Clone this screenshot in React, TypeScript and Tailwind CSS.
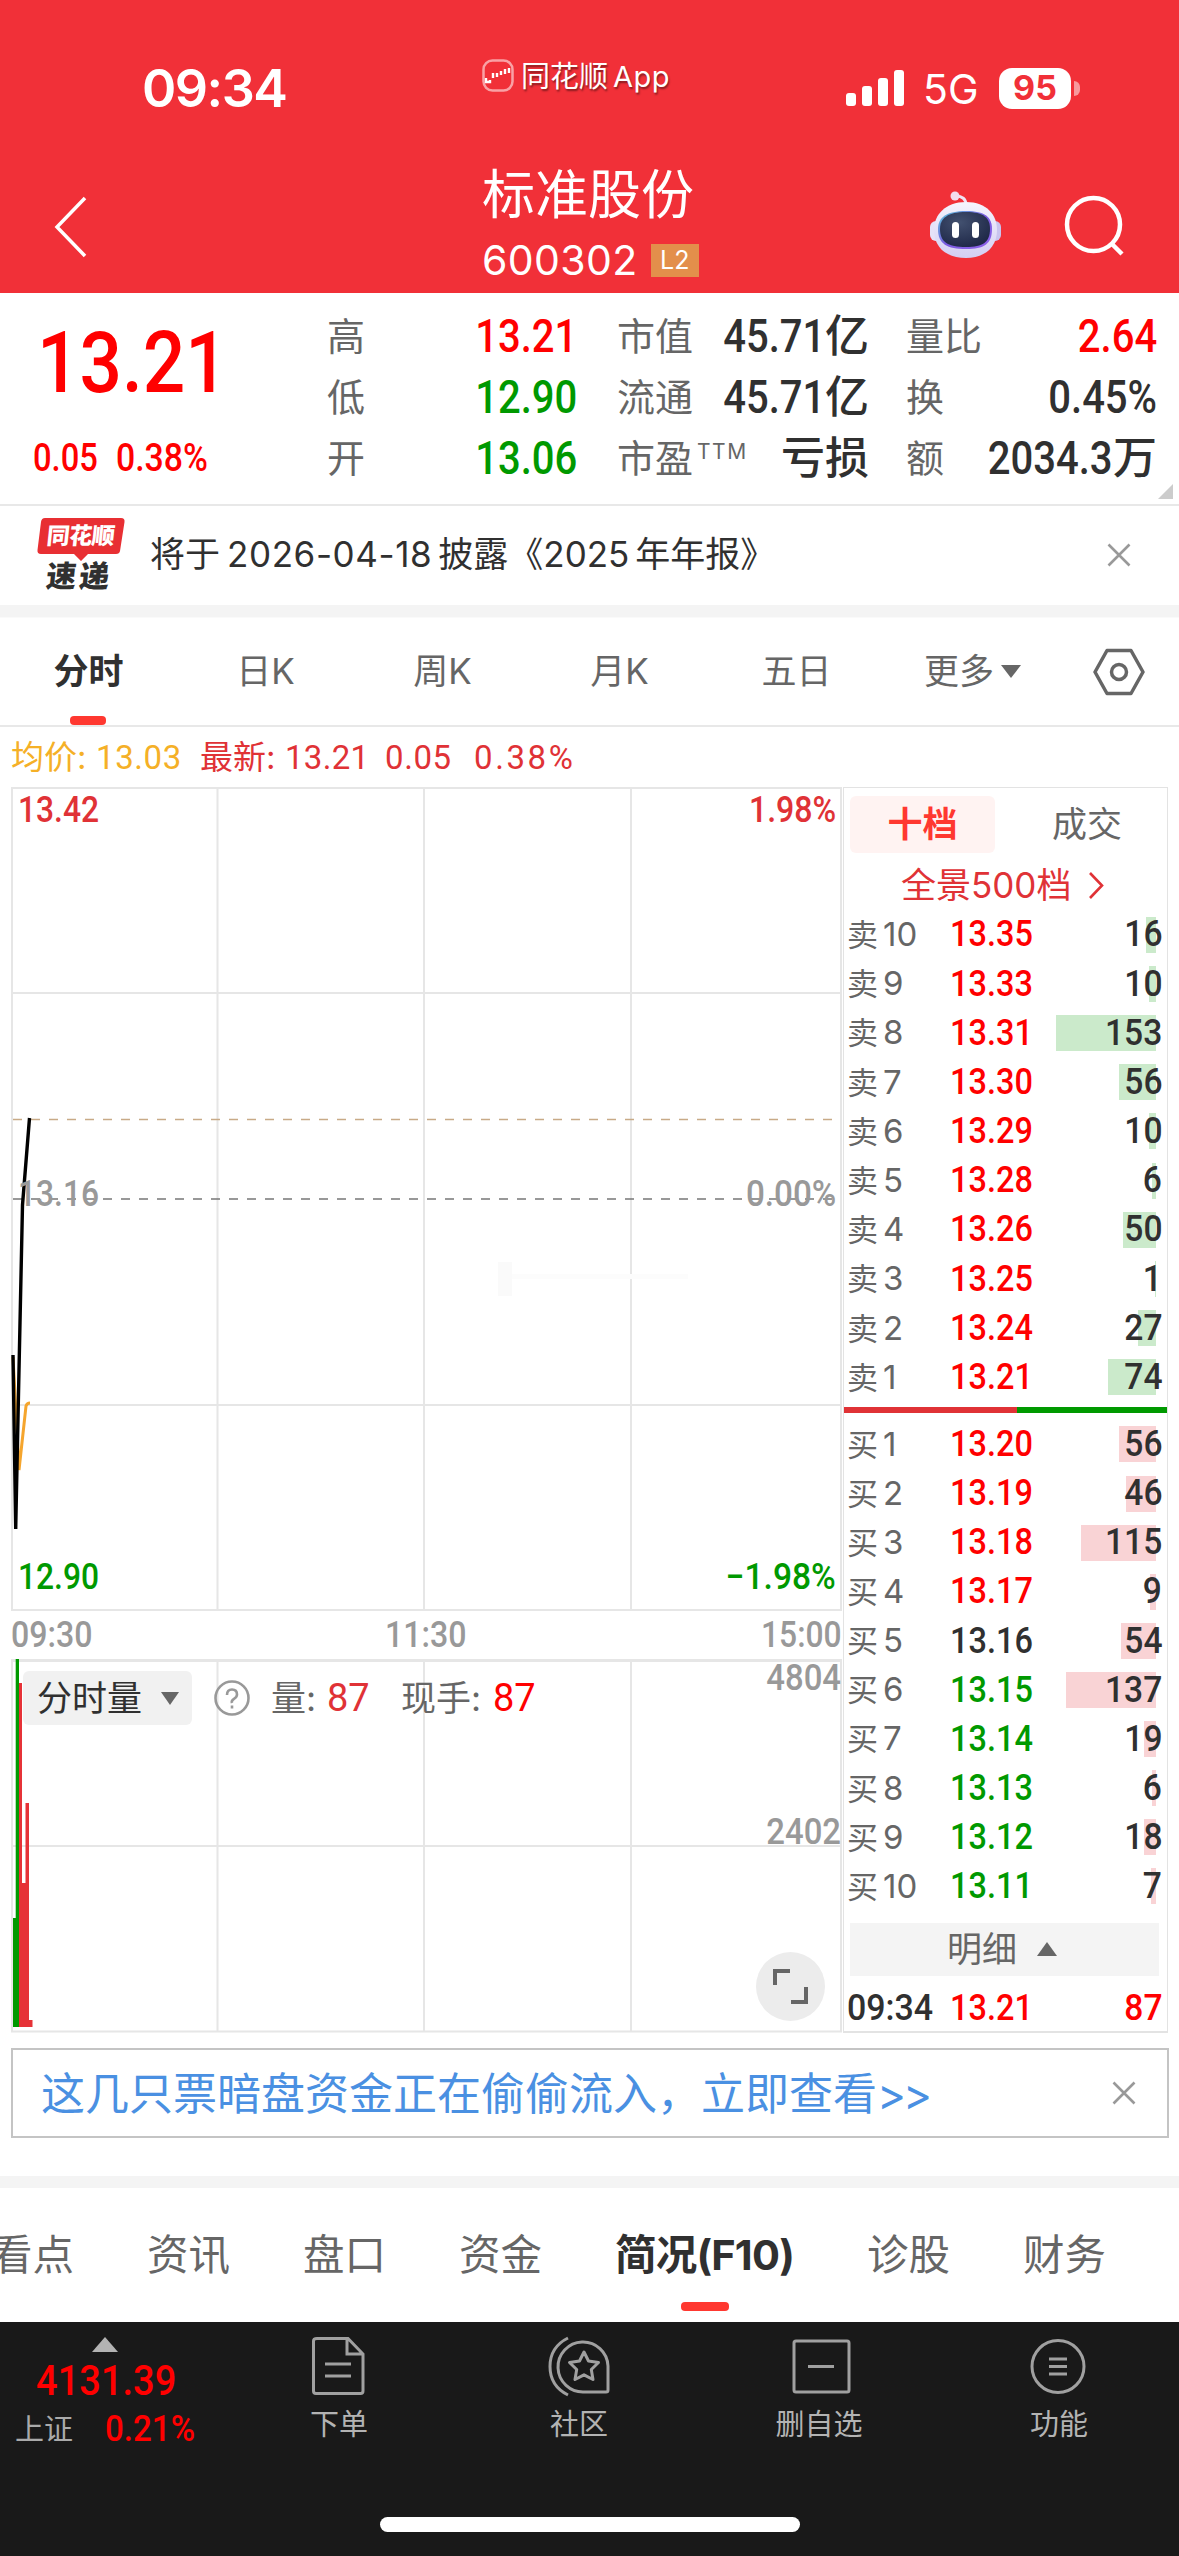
import clsx from 'clsx';

const sells = [
  { level: 10, price: '13.35', volume: 16 },
  { level: 9, price: '13.33', volume: 10 },
  { level: 8, price: '13.31', volume: 153 },
  { level: 7, price: '13.30', volume: 56 },
  { level: 6, price: '13.29', volume: 10 },
  { level: 5, price: '13.28', volume: 6 },
  { level: 4, price: '13.26', volume: 50 },
  { level: 3, price: '13.25', volume: 1 },
  { level: 2, price: '13.24', volume: 27 },
  { level: 1, price: '13.21', volume: 74 },
];

const buys = [
  { level: 1, price: '13.20', volume: 56 },
  { level: 2, price: '13.19', volume: 46 },
  { level: 3, price: '13.18', volume: 115 },
  { level: 4, price: '13.17', volume: 9 },
  { level: 5, price: '13.16', volume: 54 },
  { level: 6, price: '13.15', volume: 137 },
  { level: 7, price: '13.14', volume: 19 },
  { level: 8, price: '13.13', volume: 6 },
  { level: 9, price: '13.12', volume: 18 },
  { level: 10, price: '13.11', volume: 7 },
];

const PREV_CLOSE = 13.16;

const priceColor = (price: string) => {
  const p = Number(price);
  if (p > PREV_CLOSE) return 'text-[#ff0000]';
  if (p < PREV_CLOSE) return 'text-[#009900]';
  return 'text-[#303030]';
};

// 窄体数字
function Num({ children, right, className }: { children: React.ReactNode; right?: boolean; className?: string }) {
  return (
    <span
      className={clsx(
        "inline-block font-['Roboto'] font-medium whitespace-nowrap",
        right ? 'origin-right' : 'origin-left',
        className
      )}
    >
      {children}
    </span>
  );
}

function CloseIcon() {
  return (
    <svg width="24" height="24" viewBox="0 0 24 24" stroke="#999" strokeWidth="2.6" fill="none">
      <path d="M1.5 1.5 22.5 22.5M22.5 1.5 1.5 22.5" />
    </svg>
  );
}

function Robot() {
  return (
    <svg width="74" height="68" viewBox="0 0 74 68" fill="none">
      <defs>
        <linearGradient id="head" x1="0" y1="0" x2="0" y2="1">
          <stop offset="0" stopColor="#f6f4fd" />
          <stop offset="1" stopColor="#d3cef3" />
        </linearGradient>
        <linearGradient id="rim" x1="0" y1="0" x2="1" y2="1">
          <stop offset="0" stopColor="#58c8d8" />
          <stop offset="0.5" stopColor="#7a5be0" />
          <stop offset="1" stopColor="#8f62ea" />
        </linearGradient>
        <radialGradient id="face" cx="0.4" cy="0.3" r="0.8">
          <stop offset="0" stopColor="#42506f" />
          <stop offset="1" stopColor="#1b2444" />
        </radialGradient>
      </defs>
      <path d="M27 5C33 5 37 8 37 14" stroke="#f0e4f4" strokeWidth="3" />
      <circle cx="26" cy="5" r="4.5" fill="#f3dcec" />
      <rect x="1" y="30" width="14" height="20" rx="6" fill="#e6e2f8" />
      <rect x="58" y="30" width="14" height="20" rx="6" fill="#c9c4ef" />
      <path d="M37 11C58 11 68 24 68 39C68 57 55 67 37 67C18 67 5 57 5 39C5 24 16 11 37 11Z" fill="url(#head)" />
      <path d="M37 20C56 20 63 26 63 38C63 53 55 58 37 58C18 58 9 53 9 38C9 26 18 20 37 20Z" fill="url(#rim)" />
      <path d="M37 21C55 21 61 27 61 38C61 51 54 56 37 56C19 56 11 51 11 38C11 27 19 21 37 21Z" fill="url(#face)" />
      <rect x="23" y="31" width="7" height="16" rx="3.5" fill="#fff" />
      <rect x="43" y="31" width="7" height="16" rx="3.5" fill="#fff" />
    </svg>
  );
}

function Header() {
  return (
    <header className="h-[293px] bg-[#f13038] text-white">
      <div className="flex h-[136px] items-center pt-10">
        <div className="w-[482px] pt-px pl-[142px] text-[52px] leading-none font-semibold tracking-[-1.5px]">09:34</div>
        <div className="mb-[25px] flex w-[363px] items-center">
          <svg width="32" height="33" viewBox="0 0 32 33" fill="none">
            <rect x="1.5" y="1.5" width="29" height="30" rx="9" stroke="#fff" strokeOpacity="0.55" strokeWidth="2.5" />
            <path d="M4 19V23H8V21M11 19V14M15 14V18M19 16V12M23 15V10M27 14V9" stroke="#fff" strokeWidth="2.4" />
          </svg>
          <span className="mt-[2px] ml-[7px] text-[29px] leading-none whitespace-nowrap [text-shadow:1px_2px_2px_rgba(0,0,0,0.45)]">
            同花顺<span className="ml-[5px] tracking-[0.5px]">App</span>
          </span>
        </div>
        <svg width="60" height="38" viewBox="0 0 60 38" fill="#fff">
          <rect x="1" y="24" width="10" height="13" rx="3" />
          <rect x="17" y="17" width="10" height="20" rx="3" />
          <rect x="33" y="9" width="10" height="28" rx="3" />
          <rect x="49" y="1" width="10" height="36" rx="3" />
        </svg>
        <span className="ml-[18px] w-[76px] pt-[2px] text-[41px] leading-none">5G</span>
        <div className="flex h-[41px] w-[72px] items-center justify-center rounded-[13px] bg-white text-[34px] leading-none font-bold text-[#f13038]">
          95
        </div>
        <div className="ml-[3px] h-[15px] w-[6px] rounded-r-full bg-white/50" />
      </div>

      <div className="flex pl-[54px]">
        <svg className="mt-[60px]" width="34" height="62" viewBox="0 0 34 62" fill="none" stroke="#fff" strokeWidth="3.5">
          <path d="M31 2 3 31 31 60" />
        </svg>
        <div className="ml-[394px] w-[447px] pt-[33px]">
          <div className="text-[53px] leading-none">标准股份</div>
          <div className="mt-[18px] flex items-center">
            <span className="text-[41px] leading-none tracking-[0.4px]">600302</span>
            <span className="ml-[13px] flex h-[33px] w-[48px] items-center justify-center bg-[#e38f4b] text-[25px] leading-none">
              L2
            </span>
          </div>
        </div>
        <div className="pt-[55px]">
          <Robot />
        </div>
        <svg className="mt-[59px] ml-[60px]" width="62" height="62" viewBox="0 0 62 62" fill="none" stroke="#fff" strokeWidth="4.5">
          <circle cx="30.5" cy="29.5" r="26.5" />
          <path d="M48 48 59 59" />
        </svg>
      </div>
    </header>
  );
}

function Stat({ label, sup, value, unit, color = 'text-[#303030]' }: {
  label: string;
  sup?: string;
  value?: string;
  unit?: string;
  color?: string;
}) {
  return (
    <div className="flex h-[61px] items-center leading-none">
      <span className="text-[38px] text-[#666]">{label}</span>
      {sup && <span className="mb-3 ml-1 text-[21px] tracking-[1.5px] text-[#666]">{sup}</span>}
      <span className={clsx('ml-auto flex items-center', color)}>
        {value && <Num right className="scale-x-[0.87] text-[46px]">{value}</Num>}
        {unit && <span className="text-[44px] font-medium">{unit}</span>}
      </span>
    </div>
  );
}

function Quote() {
  return (
    <section className="relative flex h-[213px] border-b-2 border-[#e8e8e8] pt-[12px]">
      <div className="w-[327px] text-[#ff0000]">
        <Num className="mt-[16px] ml-[37px] scale-x-[0.88] text-[85px] leading-none">13.21</Num>
        <div className="mt-[33px] flex text-[38px] leading-none">
          <Num className="ml-[33px] w-[83px] scale-x-[0.86]">0.05</Num>
          <Num className="scale-x-[0.89]">0.38%</Num>
        </div>
      </div>
      <div className="w-[250px]">
        <Stat label="高" value="13.21" color="text-[#ff0000]" />
        <Stat label="低" value="12.90" color="text-[#009900]" />
        <Stat label="开" value="13.06" color="text-[#009900]" />
      </div>
      <div className="ml-[40px] w-[252px]">
        <Stat label="市值" value="45.71" unit="亿" />
        <Stat label="流通" value="45.71" unit="亿" />
        <Stat label="市盈" sup="TTM" unit="亏损" />
      </div>
      <div className="ml-[37px] w-[251px]">
        <Stat label="量比" value="2.64" color="text-[#ff0000]" />
        <Stat label="换" value="0.45%" />
        <Stat label="额" value="2034.3" unit="万" />
      </div>
      <svg className="absolute right-[6px] bottom-[5px]" width="15" height="15" viewBox="0 0 15 15">
        <path d="M15 0V15H0Z" fill="#ccc" />
      </svg>
    </section>
  );
}

function News() {
  return (
    <section className="flex h-[99px] items-center pb-[2px]">
      <div className="relative ml-[37px] h-[74px] w-[113px]">
        <svg className="absolute top-0 left-0" width="89" height="44" viewBox="0 0 89 44" fill="#e82f33">
          <path d="M8 0H84Q88 0 87.5 4L83 33Q82.5 36 79 36H51L44 43 37 36H4Q0 36 .5 32L4 4Q4.5 0 8 0Z" />
        </svg>
        <div className="relative -skew-x-6 pt-[6px] pl-[10px] text-[23px] leading-[25px] font-black tracking-[-0.5px] text-white">
          同花顺
        </div>
        <div className="relative -skew-x-6 pt-[11px] pl-[10px] text-[30px] leading-[32px] font-black tracking-[3px] text-[#303030]">
          速递
        </div>
      </div>
      <span className="flex items-center text-[35px] leading-none whitespace-nowrap text-[#303030]">
        将于<span className="mr-[6px] ml-[7px] tracking-[0.6px]">2026-04-18</span>披露《2025
        <span className="ml-[6px]">年年报》</span>
      </span>
      <div className="mr-[48px] ml-auto">
        <CloseIcon />
      </div>
    </section>
  );
}

function ChartTabs() {
  return (
    <nav className="flex h-[110px] items-center border-t border-b-2 border-t-[#fafafa] border-b-[#e8e8e8] text-[35px] leading-none text-[#666]">
      <div className="relative flex h-full w-[177px] items-center justify-center font-bold text-[#303030]">
        分时
        <span className="absolute bottom-0 left-[70px] h-[9px] w-[36px] rounded-[4px] bg-[#ff3830]" />
      </div>
      {['日K', '周K', '月K', '五日'].map((t) => (
        <div key={t} className="w-[177px] text-center">{t}</div>
      ))}
      <div className="flex w-[175px] items-center justify-center">
        更多
        <svg className="ml-[7px]" width="20" height="13" viewBox="0 0 20 13">
          <path d="M0 0H20L10 13Z" fill="#666" />
        </svg>
      </div>
      <svg className="ml-[33px]" width="52" height="48" viewBox="0 0 52 48" fill="none" stroke="#666" strokeWidth="3.5" strokeLinejoin="round">
        <path d="M14 2.5H38L50 24 38 45.5H14L2 24Z" />
        <circle cx="26" cy="24" r="7.5" />
      </svg>
    </nav>
  );
}

function PriceChart() {
  return (
    <div className="relative h-[824px]">
      <svg className="block" width="831" height="824" viewBox="11 787 831 824" fill="none">
        <g stroke="#e6e6e6" strokeWidth="2">
          <path d="M11 788H842M11 993H842M11 1405H842M11 1610H842" />
          <path d="M12 788V1610M217.5 788V1610M424 788V1610M631 788V1610M841 788V1610" />
        </g>
        <path d="M13 1119.5H840" stroke="#c8aa87" strokeWidth="1.6" strokeDasharray="9 9" />
        <path d="M13 1199H840" stroke="#777" strokeWidth="1.6" strokeDasharray="9 9" />
        <path d="M13 1357 19 1470 26 1406Q27 1403 30 1403" stroke="#f5a52d" strokeWidth="3" />
        <path d="M13 1355 15.7 1529 19 1370 22.5 1205 29.5 1118" stroke="#000" strokeWidth="3.4" strokeLinejoin="bevel" />
        {/* 水印残影 */}
        <rect x="498" y="1262" width="14" height="34" fill="#fafafa" />
        <rect x="512" y="1274" width="176" height="5" fill="#fcfcfc" />
      </svg>
      <div className="text-[36.5px] leading-none">
        <Num className="absolute top-[5px] left-[7px] scale-x-[0.87] text-[#e03236]">13.42</Num>
        <Num right className="absolute top-[5px] right-[6px] scale-x-[0.88] text-[#e03236]">1.98%</Num>
        <Num className="absolute top-[389px] left-[7px] scale-x-[0.87] text-[#999]">13.16</Num>
        <Num right className="absolute top-[389px] right-[6px] scale-x-[0.91] text-[#999]">0.00%</Num>
        <Num className="absolute top-[772px] left-[7px] scale-x-[0.87] text-[#009900]">12.90</Num>
        <Num right className="absolute top-[772px] right-[6px] scale-x-[0.92] text-[#009900]">−1.98%</Num>
      </div>
    </div>
  );
}

function VolumeChart() {
  return (
    <div className="relative h-[374px]">
      <svg className="block" width="831" height="374" viewBox="11 1659 831 374" fill="none">
        <path d="M11 1660.5H842" stroke="#e6e6e6" strokeWidth="3" />
        <g stroke="#e6e6e6" strokeWidth="2">
          <path d="M11 1846H842M11 2031.5H842" />
          <path d="M12 1660V2032M217.5 1660V2032M424 1660V2032M631 1660V2032M841 1660V2032" />
        </g>
        <path d="M13 1918H18.5V2027H13ZM15.7 1659H19V2027H15.7Z" fill="#009900" />
        <path d="M19 1683H22V2027H19ZM22 1883H25.5V2027H22ZM25.5 1803H29V2027H25.5ZM29 2020H32.5V2027H29Z" fill="#e63237" />
      </svg>
      <div className="absolute top-[12px] left-[12px] flex h-[54px] items-center text-[35px] leading-none">
        <div className="flex h-full w-[169px] items-center rounded-[6px] bg-[#f1f1f1] pl-[14px] text-[#303030]">
          分时量
          <svg className="ml-[19px]" width="18" height="13" viewBox="0 0 18 13">
            <path d="M0 0H18L9 13Z" fill="#666" />
          </svg>
        </div>
        <svg className="ml-[21px]" width="38" height="38" viewBox="0 0 38 38" fill="none" stroke="#999" strokeWidth="2.6">
          <circle cx="19" cy="19" r="16.5" />
          <path d="M14 16Q14 10.5 19 10.5T24 15.5Q24 18 21 19.8T19 24" />
          <path d="M19 26.5V29.5" />
        </svg>
        <span className="ml-[20px] w-[56px] text-[#666]">量:</span>
        <span className="w-[74px] font-['Roboto'] text-[38px] text-[#e03236]">87</span>
        <span className="w-[92px] text-[#666]">现手:</span>
        <span className="font-['Roboto'] text-[38px] text-[#ff0000]">87</span>
      </div>
      <div className="text-[36.5px] leading-none text-[#999]">
        <Num right className="absolute top-px right-px scale-x-[0.9]">4804</Num>
        <Num right className="absolute top-[155px] right-px scale-x-[0.9]">2402</Num>
      </div>
      <div className="absolute right-[17px] bottom-[12px] flex size-[69px] items-center justify-center rounded-full bg-[#ececec]">
        <svg width="37" height="37" viewBox="0 0 37 37" fill="none" stroke="#666" strokeWidth="4">
          <path d="M3 17V3H18M34 19V34H19" />
        </svg>
      </div>
    </div>
  );
}

function BookRow({ side, level, price, volume }: { side: '卖' | '买'; level: number; price: string; volume: number }) {
  return (
    <div className={clsx('relative flex items-center leading-none', side === '卖' ? 'h-[49.2px]' : 'h-[49.1px]')}>
      <span
        className={clsx('absolute right-[11px] h-[36px]', side === '卖' ? 'bg-[#cbeacb]' : 'bg-[#f9d3d5]')}
        style={{ width: volume * 0.654 }}
      />
      <span className="relative ml-[3px] w-[36px] text-[31px] text-[#666]">{side}</span>
      <span className="relative w-[67px] text-[33px] text-[#666]">{level}</span>
      <Num className={clsx('relative scale-x-[0.89] text-[36.5px]', priceColor(price))}>{price}</Num>
      <Num right className="relative mr-[5px] ml-auto scale-x-[0.92] text-[36.5px] text-[#303030]">{volume}</Num>
    </div>
  );
}

function OrderBook() {
  return (
    <div className="ml-px h-[1246px] w-[325px] border border-b-2 border-[#e3e3e3]">
      <div className="mt-[8px] ml-[6px] flex h-[57px] text-[35px] leading-none">
        <div className="flex w-[145px] shrink-0 items-center justify-center rounded-[6px] bg-[#fff3f2] font-bold text-[#ff3830]">十档</div>
        <div className="flex w-[184px] shrink-0 items-center justify-center text-[#666]">成交</div>
      </div>
      <div className="flex h-[57px] items-center pt-[8px] pl-[57px] text-[35px] leading-none text-[#e03236]">
        全景500档
        <svg className="ml-[17px]" width="17" height="29" viewBox="0 0 17 29" fill="none" stroke="#e03236" strokeWidth="2.6">
          <path d="M2 2 14 14.5 2 27" />
        </svg>
      </div>
      {sells.map((r) => (
        <BookRow key={r.level} side="卖" {...r} />
      ))}
      <div className="mt-[5px] mb-[7px] flex h-[6px]">
        <div className="w-[173px] bg-[#e03236]" />
        <div className="flex-1 bg-[#009900]" />
      </div>
      {buys.map((r) => (
        <BookRow key={r.level} side="买" {...r} />
      ))}
      <div className="mr-[8px] ml-[6px] mt-[12px] flex h-[53px] items-center bg-[#f4f4f4] pl-[97px] text-[35px] leading-none text-[#666]">
        明细
        <svg className="ml-[20px]" width="20" height="14" viewBox="0 0 20 14">
          <path d="M0 14H20L10 0Z" fill="#666" />
        </svg>
      </div>
      <div className="mt-[6px] flex h-[53px] items-center text-[36.5px] leading-none">
        <Num className="ml-[3px] w-[103px] scale-x-[0.93] text-[#303030]">09:34</Num>
        <Num className="scale-x-[0.89] text-[#ff0000]">13.21</Num>
        <Num right className="mr-[5px] ml-auto scale-x-[0.92] text-[#ff0000]">87</Num>
      </div>
    </div>
  );
}

function BottomBar() {
  const items = [
    {
      label: '下单',
      icon: (
        <path d="M4 1.5H35L50 17V54Q50 56.5 47.5 56.5H3Q.5 56.5 .5 54V4Q.5 1.5 4 1.5ZM34 2V17H50M12 27H38M12 39H38" />
      ),
    },
    {
      label: '社区',
      icon: (
        <>
          <path d="M18 1Q0 10 0 29.5T18 58" />
          <path d="M58 29V53Q58 55 56 55H34A25 25 0 1 1 58 29Z" />
          <path d="m34 15 4.5 9 10 1.5-7.2 7 1.7 10-9-4.7-9 4.7 1.7-10-7.2-7 10-1.5Z" strokeLinejoin="round" />
        </>
      ),
    },
    { label: '删自选', icon: <path d="M4 6Q4 4 6 4H57Q59 4 59 6V53Q59 55 57 55H6Q4 55 4 53ZM18 29.5H44" /> },
    {
      label: '功能',
      icon: (
        <>
          <circle cx="28" cy="29.5" r="26" />
          <path d="M19 22H37M19 29.5H37M19 37H37" />
        </>
      ),
    },
  ];

  return (
    <footer className="h-[234px] bg-[#191919]">
      <div className="flex h-[195px]">
        <div className="w-[219px] shrink-0 pt-[15px] leading-none">
          <svg className="ml-[92px]" width="26" height="15" viewBox="0 0 26 15">
            <path d="M0 15 13 0 26 15Z" fill="#b3b3b3" />
          </svg>
          <Num className="mt-[7px] ml-[36px] block scale-x-[0.885] text-[43px] text-[#ff0000]">4131.39</Num>
          <div className="mt-[9px] flex items-center pl-[15px]">
            <span className="w-[90px] text-[29px] text-[#aaa]">上证</span>
            <Num className="scale-x-[0.92] text-[36px] text-[#ff0000]">0.21%</Num>
          </div>
        </div>
        {items.map((it) => (
          <div key={it.label} className="flex w-[240px] flex-col items-center pt-[15px]">
            <svg className="overflow-visible" width={it.label === '下单' ? 53 : 58} height="58" fill="none" stroke="#a0a0a0" strokeWidth="3">
              {it.icon}
            </svg>
            <span className="mt-[15px] text-[29px] leading-none text-[#b3b3b3]">{it.label}</span>
          </div>
        ))}
      </div>
      <div className="mx-auto h-[15px] w-[420px] rounded-full bg-white" />
    </footer>
  );
}

export default function App() {
  return (
    <main className="h-[2556px] w-[1179px] overflow-hidden bg-white font-['Inter','Noto_Sans_CJK_SC',sans-serif]">
      <Header />
      <Quote />
      <News />
      <div className="h-[12px] bg-[#f4f4f4]" />
      <ChartTabs />

      <div className="flex h-[60px] items-center pl-[11px] text-[33px] leading-none text-[#e03236]">
        <span className="w-[85px] text-[#f5b027]">均价:</span>
        <span className="w-[104px] font-['Roboto'] tracking-[0.6px] text-[#f5b027]">13.03</span>
        <span className="w-[85px]">最新:</span>
        <span className="w-[100px] font-['Roboto'] tracking-[0.3px]">13.21</span>
        <span className="w-[89px] font-['Roboto'] tracking-[0.6px]">0.05</span>
        <span className="font-['Roboto'] tracking-[2.6px]">0.38%</span>
      </div>

      <div className="ml-[11px] flex h-[1246px]">
        <div className="w-[831px]">
          <PriceChart />
          <div className="relative flex h-[48px] items-center justify-between text-[36.5px] leading-none text-[#999]">
            <Num className="scale-x-[0.88]">09:30</Num>
            <Num className="ml-[9px] scale-x-[0.88]">11:30</Num>
            <Num right className="scale-x-[0.87]">15:00</Num>
          </div>
          <VolumeChart />
        </div>
        <OrderBook />
      </div>

      <div className="mt-[15px] mr-[10px] ml-[11px] flex h-[90px] items-center border-2 border-[#c4c4c4] pl-[28px] text-[#4a90e2]">
        <span className="pt-[2px] text-[44px] leading-none whitespace-nowrap">
          这几只票暗盘资金正在偷偷流入，立即查看<span className="tracking-[-3px]">&gt;&gt;</span>
        </span>
        <div className="mr-[31px] ml-auto">
          <CloseIcon />
        </div>
      </div>

      <div className="mt-[38px] h-[12px] bg-[#f4f4f4]" />
      <nav className="relative -ml-[9px] flex h-[134px] items-center gap-[73px] pt-[2px] text-[41.5px] leading-none whitespace-nowrap text-[#666]">
        <span>看点</span>
        <span>资讯</span>
        <span>盘口</span>
        <span>资金</span>
        <span className="relative flex h-full items-center font-bold tracking-[-0.8px] text-[#303030]">
          简况(F10)
          <span className="absolute bottom-[11px] left-1/2 h-[9px] w-[48px] -translate-x-1/2 rounded-[4px] bg-[#ff3830]" />
        </span>
        <span>诊股</span>
        <span>财务</span>
      </nav>
      <BottomBar />
    </main>
  );
}
